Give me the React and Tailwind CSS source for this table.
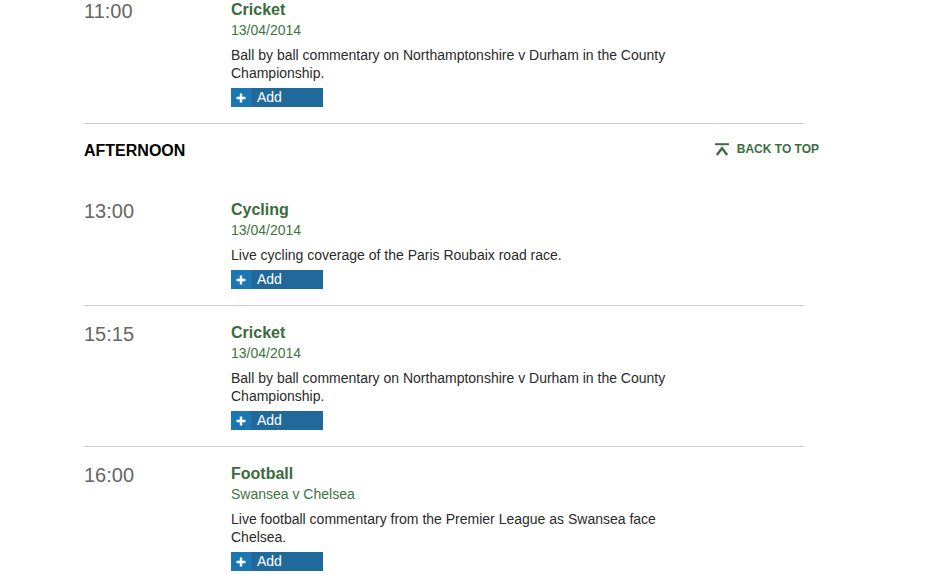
import React from "react";

const items = [
  {
    time: "11:00",
    title: "Cricket",
    sub: "13/04/2014",
    desc: "Ball by ball commentary on Northamptonshire v Durham in the County Championship.",
  },
];

const afternoon = [
  {
    time: "13:00",
    title: "Cycling",
    sub: "13/04/2014",
    desc: "Live cycling coverage of the Paris Roubaix road race.",
  },
  {
    time: "15:15",
    title: "Cricket",
    sub: "13/04/2014",
    desc: "Ball by ball commentary on Northamptonshire v Durham in the County Championship.",
  },
  {
    time: "16:00",
    title: "Football",
    sub: "Swansea v Chelsea",
    desc: "Live football commentary from the Premier League as Swansea face Chelsea.",
  },
];

function AddButton() {
  return (
    <button className="mt-[6px] flex h-[19px] w-[92px] items-stretch bg-[#21699a] text-left">
      <span className="flex w-[20px] items-center justify-center bg-[#1b77b4]">
        <svg width="10" height="10" viewBox="0 0 10 10">
          <path d="M5 0.5v9M0.5 5h9" stroke="#fff" strokeWidth="2.4" />
        </svg>
      </span>
      <span className="pl-[6px] text-[14px] leading-[19px] text-white">Add</span>
    </button>
  );
}

function Item({ item, first }) {
  return (
    <div
      className={
        "flex border-b border-[#cccccc] pb-[16px] " + (first ? "pt-0" : "pt-[17px]")
      }
    >
      <div className="w-[147px] shrink-0 pt-[1px] text-[20px] leading-[20px] text-[#666666]">
        {item.time}
      </div>
      <div className="w-[440px]">
        <div className="text-[16px] font-bold leading-[20px] text-[#386c3c]">
          {item.title}
        </div>
        <div className="text-[14px] leading-[20px] text-[#3d7442]">{item.sub}</div>
        <p className="mt-[6px] text-[14px] leading-[18px] text-[#2a2a2a]">{item.desc}</p>
        <AddButton />
      </div>
    </div>
  );
}

export default function App() {
  return (
    <div className="h-[576px] w-full overflow-hidden bg-white font-['Liberation_Sans',Arial,sans-serif]">
      <div className="ml-[84px] w-[720px]">
        {items.map((it) => (
          <Item key={it.time} item={it} first />
        ))}

        <div className="-mr-[15px] flex items-start justify-between pt-[17px] pb-[22px]">
          <h2 className="text-[16px] font-bold leading-[20px] text-black">AFTERNOON</h2>
          <a
            href="#top"
            className="mt-[1px] flex items-center gap-[8px] text-[12px] font-bold leading-[14px] text-[#3a6e3f]"
          >
            <svg width="14" height="13" viewBox="0 0 14 13">
              <path d="M0 1.2h14" stroke="#3a6e3f" strokeWidth="2" />
              <path d="M1.8 12L7 5.2L12.2 12" stroke="#3a6e3f" strokeWidth="2.4" fill="none" />
            </svg>
            BACK TO TOP
          </a>
        </div>

        {afternoon.map((it) => (
          <Item key={it.time} item={it} />
        ))}
      </div>
    </div>
  );
}
